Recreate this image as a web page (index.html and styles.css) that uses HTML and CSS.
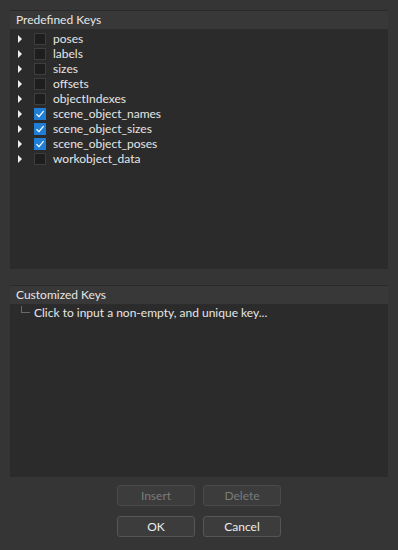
FILE: index.html
```html
<!DOCTYPE html>
<html lang="en">
<head>
    <meta charset="UTF-8">
    <title>Keys</title>
    <link rel="stylesheet" href="styles.css">
</head>
<body>
    <div class="dialog">
        <div class="panel panel-predefined">
            <div class="panel-header">Predefined Keys</div>
            <div class="panel-body" id="keyList"></div>
        </div>

        <div class="panel panel-custom">
            <div class="panel-header">Customized Keys</div>
            <div class="panel-body">
                <div class="hint-row">
                    <span class="branch"></span>
                    <span>Click to input a non-empty, and unique key...</span>
                </div>
            </div>
        </div>

        <div class="buttons">
            <button disabled>Insert</button>
            <button disabled>Delete</button>
        </div>
        <div class="buttons">
            <button>OK</button>
            <button>Cancel</button>
        </div>
    </div>

    <script>
        const keys = [
            ['poses', false],
            ['labels', false],
            ['sizes', false],
            ['offsets', false],
            ['objectIndexes', false],
            ['scene_object_names', true],
            ['scene_object_sizes', true],
            ['scene_object_poses', true],
            ['workobject_data', false]
        ];

        const list = document.getElementById('keyList');
        keys.forEach(([name, checked]) => {
            const row = document.createElement('div');
            row.className = 'key-row';
            row.innerHTML =
                '<span class="arrow"></span>' +
                '<span class="check' + (checked ? ' checked' : '') + '">' +
                (checked ? '<svg width="10" height="10" viewBox="0 0 10 10"><path d="M1.5 5.2 L4 7.6 L8.6 2.2" fill="none" stroke="#fff" stroke-width="1.3"/></svg>' : '') +
                '</span>' +
                '<span class="key-name">' + name + '</span>';
            list.appendChild(row);
        });
    </script>
</body>
</html>
```

FILE: styles.css
```css
* {
    margin: 0;
    padding: 0;
    box-sizing: border-box;
}

body {
    background: #353535;
    color: #e6e6e6;
    font-family: 'Lato', 'Noto Sans', sans-serif;
    font-size: 12px;
    width: 398px;
    height: 550px;
    overflow: hidden;
}

.dialog {
    padding: 10px 10px 0 10px;
    display: flex;
    flex-direction: column;
}

.panel {
    border-top: 1px solid #2a2a2a;
}

.panel-header {
    background: #383838;
    height: 19px;
    line-height: 18px;
    padding-left: 6px;
    border-bottom: 1px solid #2c2c2c;
}

.panel-body {
    background: #2b2b2b;
}

.panel-predefined .panel-body {
    height: 239px;
    padding-top: 1px;
}

.panel-custom {
    margin-top: 16px;
}

.panel-custom .panel-body {
    height: 172px;
}

.key-row {
    display: flex;
    align-items: center;
    height: 15px;
}

.arrow {
    width: 0;
    height: 0;
    margin-left: 8px;
    border-top: 4px solid transparent;
    border-bottom: 4px solid transparent;
    border-left: 4px solid #f0f0f0;
}

.check {
    width: 12px;
    height: 12px;
    margin-left: 12px;
    background: #1e1e1e;
    border: 1px solid #3e3e3e;
    display: flex;
    align-items: center;
    justify-content: center;
}

.check.checked {
    background: #1f7fd6;
    border-color: #1f7fd6;
}

.key-name {
    margin-left: 7px;
    line-height: 15px;
}

.hint-row {
    display: flex;
    align-items: flex-start;
    height: 16px;
    line-height: 16px;
}

.branch {
    width: 9px;
    height: 7px;
    margin: 1px 4px 0 11px;
    border-left: 1px solid #6a6a6a;
    border-bottom: 1px solid #6a6a6a;
}

.buttons {
    display: flex;
    justify-content: center;
    gap: 8px;
    margin-top: 8px;
}

.buttons + .buttons {
    margin-top: 10px;
}

button {
    width: 78px;
    height: 21px;
    background: #3c3c3c;
    color: #ececec;
    border: 1px solid #565656;
    border-radius: 3px;
    font-family: 'Lato', 'Noto Sans', sans-serif;
    font-size: 12px;
}

button:disabled {
    color: #7b7b7b;
    border-color: #4a4a4a;
}
```
